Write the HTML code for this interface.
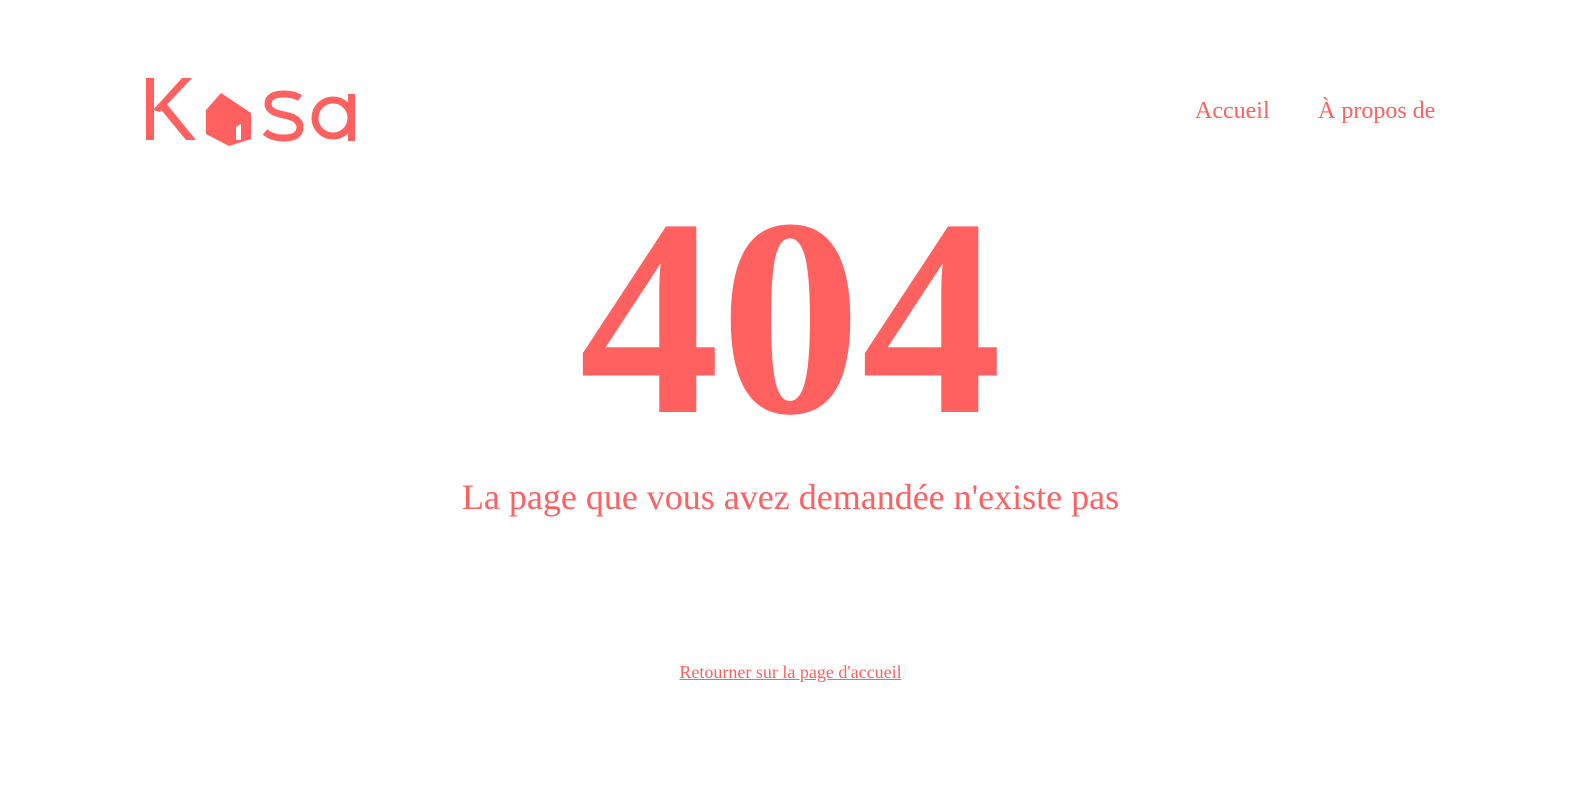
<!DOCTYPE html>
<html style="overflow:hidden"><head><meta charset="utf-8"><style>
html,body{margin:0;padding:0;overflow:hidden}
body{width:1581px;height:807px;background:#fff;font-family:"Liberation Serif",serif;color:#ff6060;position:relative}
.nav{position:absolute;top:98px;font-size:24px}
.big{position:absolute;left:0;width:1581px;text-align:center;top:176px;font-size:282px;font-weight:bold;line-height:1}
.sub{position:absolute;left:0;width:1581px;text-align:center;top:476px;font-size:36px}
.lnk{position:absolute;left:0;width:1581px;text-align:center;top:662px;font-size:18px;text-decoration:underline}
</style></head><body>
<svg style="position:absolute;left:140px;top:70px" width="220" height="80" viewBox="140 70 220 80">
<g fill="#ff6060">
<rect x="146" y="78" width="8" height="62"/>
<polygon points="153,110 182,78 192,78 160,112"/>
<polygon points="158,106 186,140 196,140 165,102"/>
<polygon points="206,110 221,93 251,113 251,139 229,146 206,134"/>
</g>
<polygon points="236,140 236,127 241,124 241,140" fill="#fff"/>
<g fill="none" stroke="#ff6060" stroke-width="7">
<path d="M300,98 Q294,94 284,94 Q268,94 268,104 Q268,112 284,115 Q300,118 300,127 Q300,138 284,138 Q272,138 265,132"/>
<circle cx="333" cy="118" r="18"/>
</g>
<rect x="348" y="94" width="7" height="47" fill="#ff6060"/>
</svg>
<div class="nav" style="left:1195px">Accueil</div>
<div class="nav" style="left:1318px">À propos de</div>
<div class="big">404</div>
<div class="sub">La page que vous avez demandée n'existe pas</div>
<div class="lnk">Retourner sur la page d'accueil</div>
</body></html>
